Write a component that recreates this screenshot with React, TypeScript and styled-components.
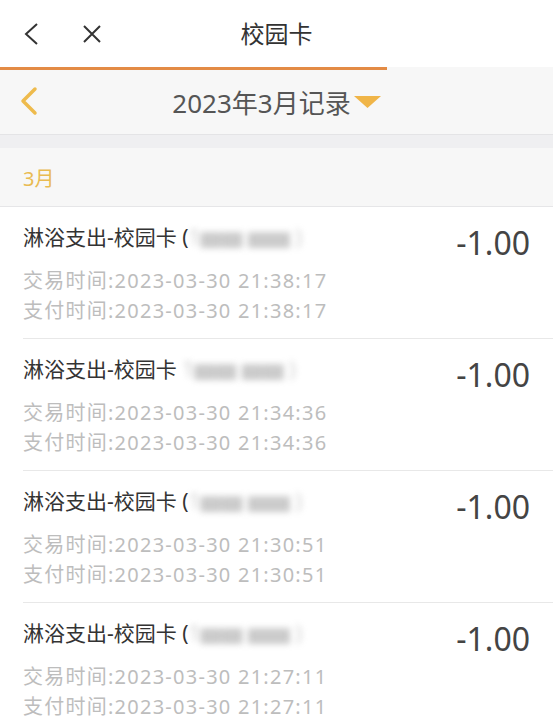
import React from 'react';
import styled, { createGlobalStyle } from 'styled-components';

const GlobalStyle = createGlobalStyle`
    html, body {
        margin: 0;
        padding: 0;
        background: #ffffff;
    }
    body {
        font-family: "Noto Sans", "Noto Sans CJK SC", sans-serif;
    }
`

const Page = styled.div`
    width: 553px;
    height: 728px;
    overflow: hidden;
    background: #ffffff;
`

const TopBar = styled.header`
    position: relative;
    height: 67px;
    display: flex;
    align-items: center;
    padding: 0 0 0 20px;
    gap: 36px;
    background: #ffffff;
`

const TopTitle = styled.h1`
    position: absolute;
    left: 0;
    right: 0;
    top: 0;
    margin: 0;
    line-height: 67px;
    text-align: center;
    font-size: 24px;
    font-weight: 400;
    color: #333333;
    pointer-events: none;
`

const IconButton = styled.button`
    border: 0;
    background: none;
    padding: 0;
    width: 24px;
    height: 24px;
    display: flex;
    align-items: center;
    justify-content: center;
`

const Progress = styled.div`
    height: 3px;
    background: #f7f7f7;
    div {
        width: 387px;
        height: 3px;
        background: #e38b45;
    }
`

const MonthBar = styled.div`
    position: relative;
    height: 64px;
    display: flex;
    align-items: center;
    justify-content: center;
    background: #f7f7f7;
    border-bottom: 1px solid #e4e4e6;
`

const MonthBack = styled.button`
    position: absolute;
    left: 18px;
    top: 16px;
    border: 0;
    background: none;
    padding: 0;
`

const MonthTitle = styled.div`
    display: flex;
    align-items: center;
    gap: 3px;
    font-size: 26px;
    color: #555555;
`

const Gap = styled.div`
    height: 13px;
    background: #efeff1;
`

const SectionHead = styled.div`
    height: 58px;
    display: flex;
    align-items: center;
    padding-left: 23px;
    background: #f7f7f7;
    border-bottom: 1px solid #e6e6e8;
    font-size: 20px;
    color: #e9bb52;
`

const List = styled.ul`
    list-style: none;
    margin: 0;
    padding: 0 0 0 23px;
`

const Item = styled.li`
    height: 131px;
    display: flex;
    justify-content: space-between;
    border-bottom: 1px solid #e8e8e8;
    padding-right: 23px;
`

const Info = styled.div`
    padding-top: 16px;
`

const ItemTitle = styled.div`
    font-size: 21px;
    color: #333333;
    line-height: 28px;
    margin-bottom: 15px;
    white-space: nowrap;
`

const Hidden = styled.span`
    display: inline-block;
    color: #a0a0a0;
    filter: blur(3px);
    opacity: 0.55;
`

const TimeLine = styled.div`
    font-size: 20px;
    letter-spacing: 1.25px;
    color: #bdbdbd;
    line-height: 30px;
    white-space: nowrap;
`

const Amount = styled.div`
    padding-top: 14px;
    font-size: 32px;
    color: #444444;
`

const records = [
    { open: '(', time: '21:38:17' },
    { open: '', time: '21:34:36' },
    { open: '(', time: '21:30:51' },
    { open: '(', time: '21:27:11' },
]

function App() {
    return (
        <Page>
            <GlobalStyle />
            <TopBar>
                <IconButton aria-label="返回">
                    <svg width="22" height="24" viewBox="0 0 22 24">
                        <path d="M16 2 L5 12 L16 22" fill="none" stroke="#333" strokeWidth="2" />
                    </svg>
                </IconButton>
                <IconButton aria-label="关闭">
                    <svg width="22" height="22" viewBox="0 0 22 22">
                        <path d="M3 3 L19 19 M19 3 L3 19" fill="none" stroke="#333" strokeWidth="2" />
                    </svg>
                </IconButton>
                <TopTitle>校园卡</TopTitle>
            </TopBar>
            <Progress><div /></Progress>
            <MonthBar>
                <MonthBack aria-label="上个月">
                    <svg width="22" height="30" viewBox="0 0 22 30">
                        <path d="M17 3 L5 15 L17 27" fill="none" stroke="#eebb4d" strokeWidth="3.5" strokeLinejoin="round" strokeLinecap="round" />
                    </svg>
                </MonthBack>
                <MonthTitle>
                    2023年3月记录
                    <svg width="27" height="12" viewBox="0 0 27 12">
                        <path d="M0 0 H27 L13.5 12 Z" fill="#f0b548" />
                    </svg>
                </MonthTitle>
            </MonthBar>
            <Gap />
            <SectionHead>3月</SectionHead>
            <List>
                {records.map((r, i) => (
                    <Item key={i}>
                        <Info>
                            <ItemTitle>
                                淋浴支出-校园卡 {r.open}<Hidden>1▆▆ ▆▆ )</Hidden>
                            </ItemTitle>
                            <TimeLine>交易时间:2023-03-30 {r.time}</TimeLine>
                            <TimeLine>支付时间:2023-03-30 {r.time}</TimeLine>
                        </Info>
                        <Amount>-1.00</Amount>
                    </Item>
                ))}
            </List>
        </Page>
    )
}

export default App;
